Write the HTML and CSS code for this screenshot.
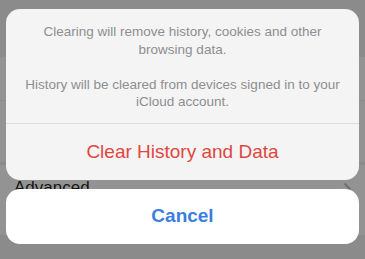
FILE: index.html
```html
<!DOCTYPE html>
<html lang="en">
    <head>
        <meta charset="UTF-8" />
        <meta name="viewport" content="width=device-width, initial-scale=1.0" />
        <title>Clear History</title>
        <link rel="stylesheet" href="styles.css">
    </head>
    <body>
        <!-- settings list behind the dimmed overlay -->
        <div class="settings">
            <div class="settings-header"></div>
            <div class="settings-row"></div>
            <div class="settings-row short"></div>
            <div class="settings-gap"></div>
            <div class="settings-row advanced">
                <span>Advanced</span>
                <svg class="chevron" width="8" height="13" viewBox="0 0 8 13">
                    <path d="M1.5 1.5 L6.5 6.5 L1.5 11.5" fill="none" stroke="#6f6f6f" stroke-width="2" />
                </svg>
            </div>
        </div>

        <!-- action sheet -->
        <div class="sheet">
            <div class="sheet-card">
                <div class="sheet-message">
                    <p>Clearing will remove history, cookies and other browsing data.</p>
                    <p>History will be cleared from devices signed in to your iCloud account.</p>
                </div>
                <button class="sheet-action destructive">Clear History and Data</button>
            </div>
            <div class="sheet-card cancel-card">
                <button class="sheet-action cancel">Cancel</button>
            </div>
        </div>
    </body>
</html>
```

FILE: styles.css
```css
body {
    margin: 0;
    width: 365px;
    height: 259px;
    overflow: hidden;
    position: relative;
    background-color: #8b8b8b;
    font-family: "Liberation Sans", Arial, sans-serif;
}

/* 뒤쪽 설정 목록 */
.settings {
    display: flex;
    flex-direction: column;
}

.settings-header {
    height: 57px;
}

.settings-row {
    height: 43px;
    background-color: #939393;
    border-bottom: 1px solid #8a8a8a;
}

.settings-row.short {
    height: 61px;
}

.settings-gap {
    height: 2px;
}

.settings-row.advanced {
    height: 70px;
    display: flex;
    align-items: flex-start;
    justify-content: space-between;
    padding: 0 14px 0 14px;
    font-size: 17px;
    color: #141414;
}

.settings-row.advanced span {
    padding-top: 13px;
}

.chevron {
    margin-top: 17px;
}

/* 액션 시트 */
.sheet {
    position: absolute;
    top: 9px;
    left: 6px;
    right: 6px;
    display: flex;
    flex-direction: column;
    gap: 9px;
}

.sheet-card {
    background-color: #f4f4f5;
    border-radius: 14px;
    display: flex;
    flex-direction: column;
    overflow: hidden;
}

.cancel-card {
    background-color: #ffffff;
}

.sheet-message {
    padding: 14px 14px 12px;
    border-bottom: 1px solid #dcdcde;
    text-align: center;
    font-size: 13.5px;
    line-height: 17.5px;
    color: #8e8e90;
}

.sheet-message p {
    margin: 0;
}

.sheet-message p + p {
    margin-top: 17.5px;
}

.sheet-action {
    border: none;
    background: none;
    font-family: inherit;
    font-size: 19px;
    height: 56px;
    padding: 0;
    cursor: pointer;
}

.sheet-action.destructive {
    color: #e0473f;
}

.sheet-action.cancel {
    height: 55px;
    color: #3a7ee2;
    font-weight: bold;
}
```
